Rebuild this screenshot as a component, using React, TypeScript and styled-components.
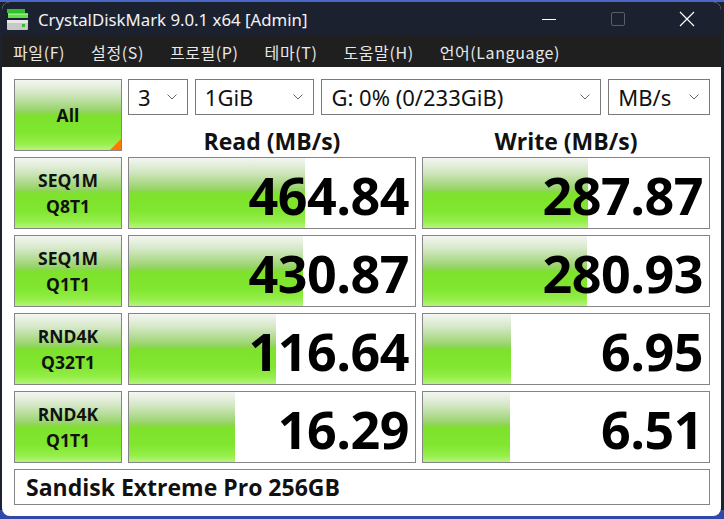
import React, { FunctionComponent } from 'react'
import styled, { createGlobalStyle } from 'styled-components'

const GlobalStyle = createGlobalStyle`
  html, body {
    margin: 0;
    padding: 0;
    width: 724px;
    height: 519px;
    overflow: hidden;
    background: #2a3550;
  }
  body {
    font-family: 'Open Sans', 'Noto Sans', 'Noto Sans CJK KR', sans-serif;
  }
`

// Desktop strip behind the window
const Desktop = styled.div`
  width: 724px;
  height: 519px;
  box-sizing: border-box;
  padding: 2px 3px 3px 2px;
  background: linear-gradient(to bottom, #4a68c8 0px, #4a68c8 2px, #1c2230 2px, #1c2230 510px, #3248a8 510px);
`

const Window = styled.div`
  width: 100%;
  height: 100%;
  display: flex;
  flex-direction: column;
  background: #fff;
  border-radius: 8px;
  overflow: hidden;
`

const TitleBar = styled.div`
  flex-shrink: 0;
  height: 34px;
  background: #1c2130;
  display: flex;
  align-items: center;
  color: #f2f2f2;
  font-family: 'Noto Sans', sans-serif;
  font-size: 16.8px;
  padding-left: 3px;
`

const AppIcon = styled.svg`
  width: 24px;
  height: 24px;
  margin-right: 9px;
`

const TitleText = styled.span`
  flex: 1;
`

const WinButton = styled.div`
  width: 69px;
  height: 34px;
  display: flex;
  align-items: center;
  justify-content: center;
`

const MenuBar = styled.div`
  flex-shrink: 0;
  height: 31px;
  background: #1f1f1f;
  display: flex;
  align-items: center;
  gap: 26px;
  padding-left: 11px;
  color: #e8e8e8;
  font-family: 'Noto Sans CJK KR', 'Noto Sans', sans-serif;
  font-size: 16px;
  letter-spacing: 0.6px;
`

const MenuItem = styled.span``

const Content = styled.div`
  flex: 1;
  padding: 12px 11px 0 12px;
  display: grid;
  grid-template-columns: 108px 288px 288px;
  grid-template-rows: repeat(5, 72px) 36px;
  column-gap: 6px;
  row-gap: 6px;
`

const greenGradient = `linear-gradient(to bottom,
  #f4f6f2 0%, #d6e8c8 18%, #a6d880 38%, #8cd454 48%,
  #7ee22c 50%, #80e630 75%, #94ee48 90%, #b4f47c 100%)`

const LabelButton = styled.div`
  position: relative;
  box-sizing: border-box;
  border: 1px solid #858585;
  background: ${greenGradient};
  display: flex;
  flex-direction: column;
  align-items: center;
  justify-content: center;
  font-weight: 700;
  font-size: 17.5px;
  line-height: 26px;
  color: #111;
`

const Corner = styled.div`
  position: absolute;
  right: 0;
  bottom: 0;
  width: 0;
  height: 0;
  border-left: 11px solid transparent;
  border-bottom: 11px solid #ff7800;
`

const TopRight = styled.div`
  grid-column: 2 / 4;
  display: flex;
  flex-direction: column;
`

const SelectRow = styled.div`
  height: 36px;
  display: flex;
  gap: 7px;
`

const Select = styled.div<{ $w: number }>`
  width: ${p => p.$w}px;
  height: 36px;
  box-sizing: border-box;
  border: 1px solid #7a7a7a;
  display: flex;
  align-items: center;
  justify-content: space-between;
  padding: 0 10px 0 9px;
  font-family: 'Noto Sans', sans-serif;
  font-size: 22px;
  color: #111;
`

const Chevron = styled.svg`
  width: 10px;
  height: 6px;
`

const HeaderRow = styled.div`
  flex: 1;
  display: grid;
  grid-template-columns: 288px 288px;
  column-gap: 6px;
`

const Header = styled.div`
  display: flex;
  align-items: flex-start;
  justify-content: center;
  font-weight: 700;
  font-size: 23px;
  line-height: 20px;
  color: #111;
  padding-top: 16px;
`

const ValueCell = styled.div`
  position: relative;
  box-sizing: border-box;
  border: 1px solid #858585;
  background: #fff;
  display: flex;
  align-items: center;
  justify-content: flex-end;
  padding: 3px 6px 0 0;
`

// the green part grows with the measured speed
const Bar = styled.div`
  position: absolute;
  left: 0;
  top: 0;
  bottom: 0;
  background: ${greenGradient};
`

const Value = styled.span`
  position: relative;
  font-weight: 700;
  font-size: 52px;
  letter-spacing: -0.5px;
  color: #000;
  line-height: 62px;
`

const Footer = styled.div`
  grid-column: 1 / 4;
  box-sizing: border-box;
  border: 1px solid #858585;
  display: flex;
  align-items: center;
  padding-left: 11px;
  font-weight: 700;
  font-size: 23px;
  color: #111;
`

const DownArrow: FunctionComponent = () => (
  <Chevron viewBox='0 0 10 6'>
    <path d='M0.5 0.5 L5 5 L9.5 0.5' fill='none' stroke='#666' strokeWidth='1' />
  </Chevron>
)

const rows = [
  { a: 'SEQ1M', b: 'Q8T1', read: '464.84', rw: 176, write: '287.87', ww: 165 },
  { a: 'SEQ1M', b: 'Q1T1', read: '430.87', rw: 174, write: '280.93', ww: 164 },
  { a: 'RND4K', b: 'Q32T1', read: '116.64', rw: 147, write: '6.95', ww: 88 },
  { a: 'RND4K', b: 'Q1T1', read: '16.29', rw: 106, write: '6.51', ww: 87 },
]

const App: FunctionComponent = () => <>
  <GlobalStyle />
  <Desktop>
    <Window>
      <TitleBar>
        <AppIcon viewBox='0 0 24 24'>
          <rect x='2' y='2' width='18' height='4' fill='#2fc12f' />
          <rect x='3' y='6' width='20' height='5' fill='#5fe04a' />
          <rect x='3' y='7' width='20' height='1' fill='#8ff07a' />
          <rect x='2' y='13' width='21' height='10' rx='1' fill='#c8c8c8' />
          <rect x='2' y='13' width='21' height='3' fill='#e8e8e8' />
          <rect x='17' y='17' width='3' height='3' fill='#2fc12f' />
        </AppIcon>
        <TitleText>CrystalDiskMark 9.0.1 x64 [Admin]</TitleText>
        <WinButton>
          <svg width='14' height='14' viewBox='0 0 14 14'>
            <rect x='0' y='7' width='14' height='1' fill='#fff' />
          </svg>
        </WinButton>
        <WinButton>
          <svg width='16' height='16' viewBox='0 0 16 16'>
            <rect x='1.5' y='1.5' width='13' height='13' rx='1.5' fill='none' stroke='#5a5e68' />
          </svg>
        </WinButton>
        <WinButton>
          <svg width='16' height='16' viewBox='0 0 16 16'>
            <path d='M1 1 L15 15 M15 1 L1 15' stroke='#fff' strokeWidth='1.2' />
          </svg>
        </WinButton>
      </TitleBar>
      <MenuBar>
        <MenuItem>파일(F)</MenuItem>
        <MenuItem>설정(S)</MenuItem>
        <MenuItem>프로필(P)</MenuItem>
        <MenuItem>테마(T)</MenuItem>
        <MenuItem>도움말(H)</MenuItem>
        <MenuItem>언어(Language)</MenuItem>
      </MenuBar>
      <Content>
        <LabelButton>
          All
          <Corner />
        </LabelButton>
        <TopRight>
          <SelectRow>
            <Select $w={60}>3<DownArrow /></Select>
            <Select $w={120}>1GiB<DownArrow /></Select>
            <Select $w={281}>G: 0% (0/233GiB)<DownArrow /></Select>
            <Select $w={102}>MB/s<DownArrow /></Select>
          </SelectRow>
          <HeaderRow>
            <Header>Read (MB/s)</Header>
            <Header>Write (MB/s)</Header>
          </HeaderRow>
        </TopRight>
        {rows.map(r => <React.Fragment key={r.a + r.b}>
          <LabelButton>
            <span>{r.a}</span>
            <span>{r.b}</span>
          </LabelButton>
          <ValueCell>
            <Bar style={{ width: r.rw }} />
            <Value>{r.read}</Value>
          </ValueCell>
          <ValueCell>
            <Bar style={{ width: r.ww }} />
            <Value>{r.write}</Value>
          </ValueCell>
        </React.Fragment>)}
        <Footer>Sandisk Extreme Pro 256GB</Footer>
      </Content>
    </Window>
  </Desktop>
</>

export default App
